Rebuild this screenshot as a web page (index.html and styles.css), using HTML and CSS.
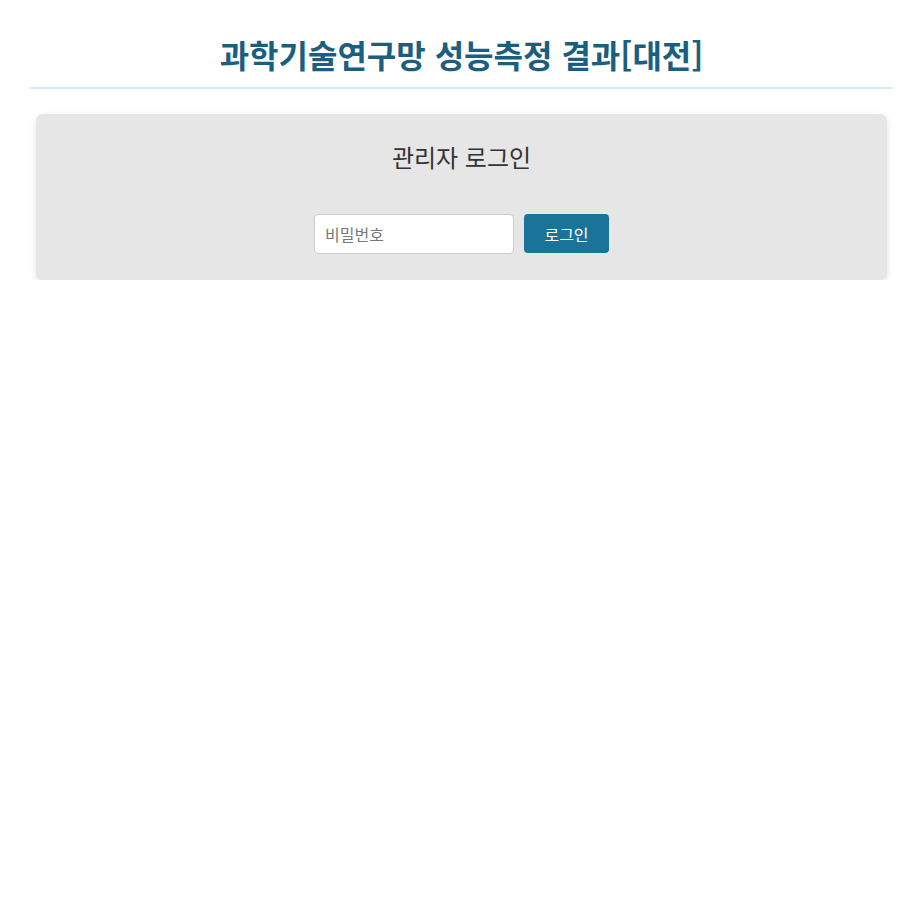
FILE: index.html
```html
<!DOCTYPE html>
<html lang="ko">
<head>
    <meta charset="UTF-8">
    <meta name="viewport" content="width=device-width, initial-scale=1.0">
    <title>과학기술연구망 성능측정 결과[대전]</title>
    <link rel="stylesheet" href="styles.css">
</head>
<body>
    <div class="page">
        <header class="page-header">
            <h1 class="page-title">과학기술연구망 성능측정 결과[대전]</h1>
        </header>

        <!-- Admin Login -->
        <section class="login-box">
            <h2 class="login-title">관리자 로그인</h2>
            <form class="login-form">
                <input type="password" class="login-input" placeholder="비밀번호">
                <button type="button" class="login-button">로그인</button>
            </form>
        </section>
    </div>
</body>
</html>
```

FILE: styles.css
```css
* {
    margin: 0;
    padding: 0;
    box-sizing: border-box;
}

body {
    font-family: "Noto Sans CJK KR", "Noto Sans", sans-serif;
    background-color: white;
    color: #333;
}

.page {
    padding: 0 20px 0 30px;
}

.page-header {
    padding-top: 32px;
    padding-bottom: 11px;
    border-bottom: 2px solid #d3ecf6;
    text-align: center;
}

.page-title {
    font-size: 32px;
    font-weight: 700;
    line-height: 44px;
    color: #1b5f80;
}

/* Login */
.login-box {
    margin: 25px 6px 0;
    padding: 26px 20px 26px;
    background-color: #e6e6e6;
    border-radius: 7px;
    box-shadow: 0 2px 6px rgba(0, 0, 0, 0.12);
    text-align: center;
}

.login-title {
    font-size: 24px;
    font-weight: 400;
    line-height: 34px;
    color: #333;
    margin-bottom: 40px;
}

.login-form {
    display: flex;
    justify-content: center;
    align-items: flex-start;
    gap: 10px;
}

.login-input {
    width: 200px;
    height: 40px;
    padding: 0 10px;
    border: 1px solid #ccc;
    border-radius: 4px;
    background-color: white;
    font-family: inherit;
    font-size: 16px;
    color: #333;
}

.login-input::placeholder {
    color: #777;
}

.login-button {
    width: 85px;
    height: 39px;
    border: none;
    border-radius: 4px;
    background-color: #1a7399;
    color: white;
    font-family: inherit;
    font-size: 16px;
    cursor: pointer;
}

.login-button:hover {
    background-color: #15607f;
}
```
